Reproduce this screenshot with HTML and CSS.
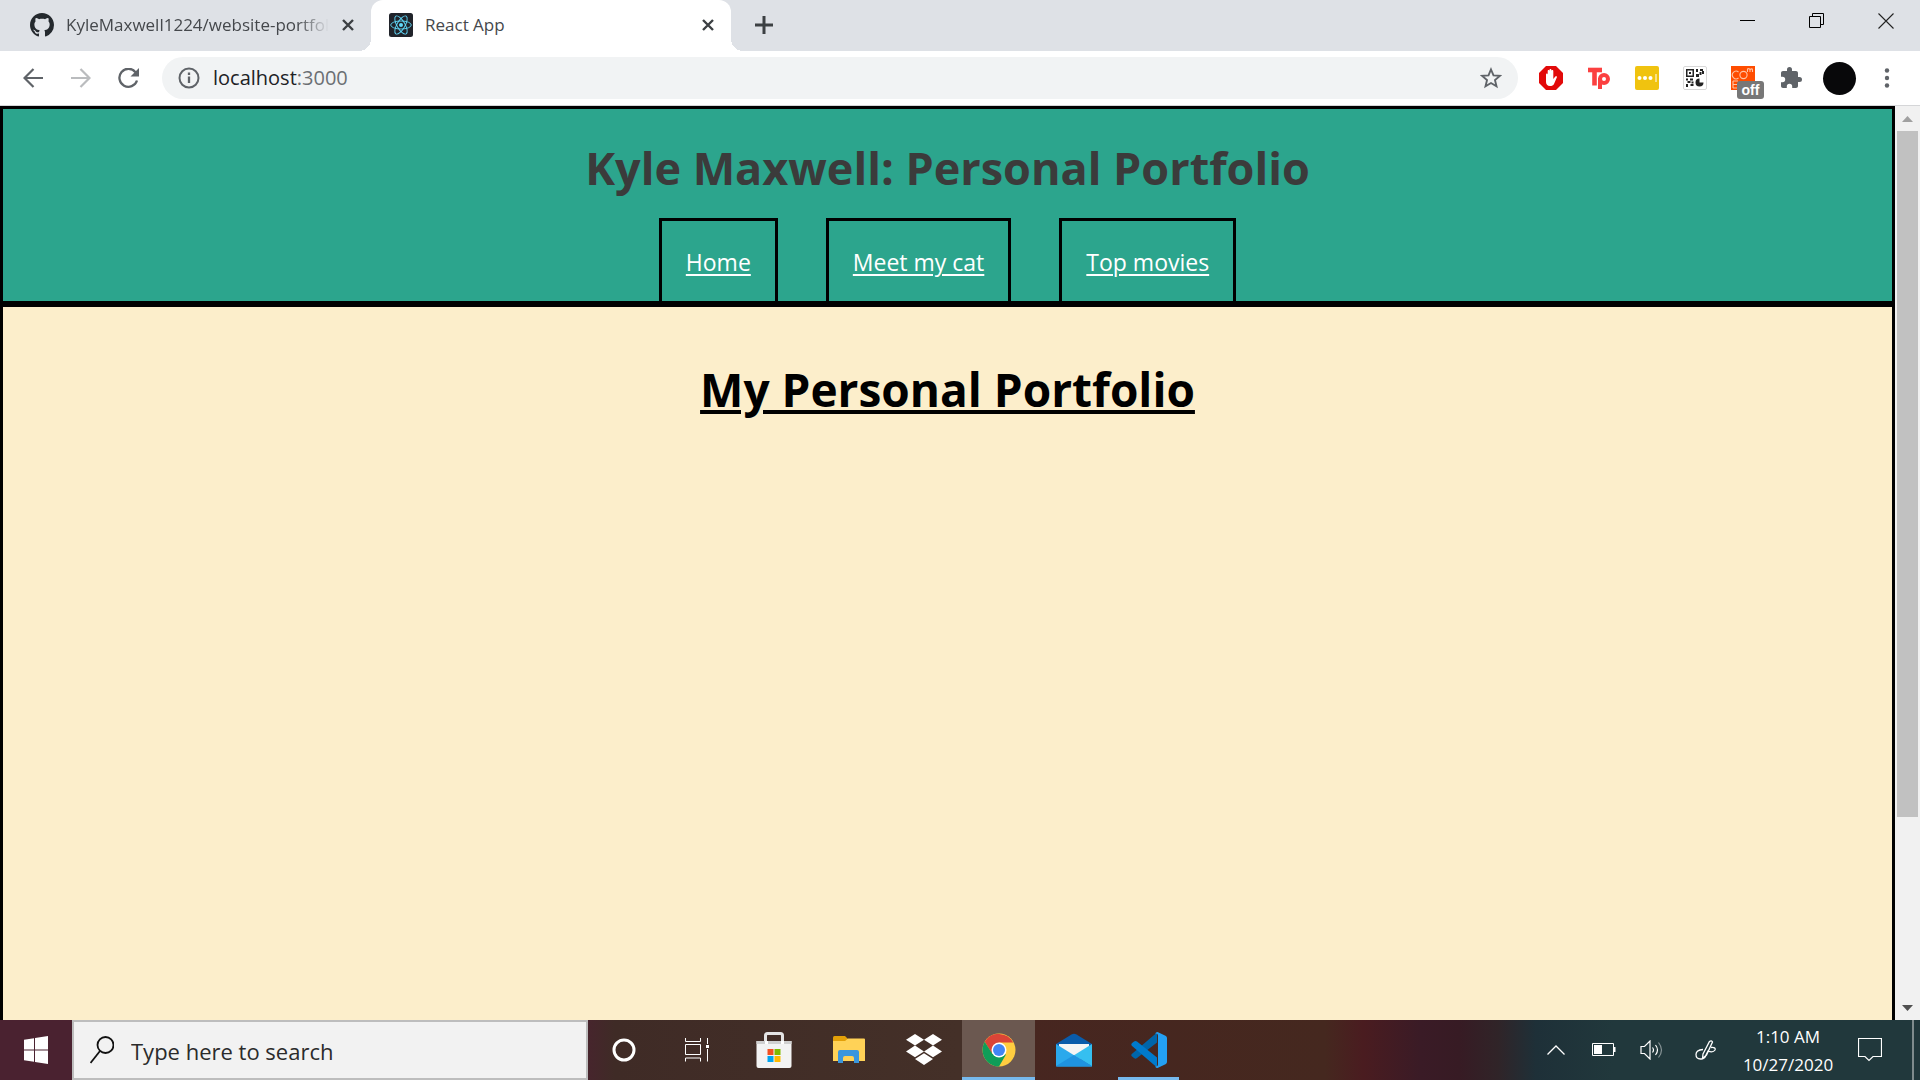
FILE: index.html
```html
<!DOCTYPE html>
<html lang="en">
<head>
<meta charset="utf-8">
<title>React App</title>
<link rel="stylesheet" href="styles.css">
</head>
<body>
<div class="tabstrip">
  <div class="tab">
    <svg class="icon24" viewBox="0 0 16 16"><path fill="#24292e" d="M8 0C3.58 0 0 3.58 0 8c0 3.54 2.29 6.53 5.47 7.59.4.07.55-.17.55-.38 0-.19-.01-.82-.01-1.49-2.01.37-2.53-.49-2.69-.94-.09-.23-.48-.94-.82-1.13-.28-.15-.68-.52-.01-.53.63-.01 1.08.58 1.23.82.72 1.21 1.87.87 2.33.66.07-.52.28-.87.51-1.07-1.78-.2-3.64-.89-3.64-3.95 0-.87.31-1.59.82-2.15-.08-.2-.36-1.02.08-2.12 0 0 .67-.21 2.2.82.64-.18 1.32-.27 2-.27s1.36.09 2 .27c1.53-1.04 2.2-.82 2.2-.82.44 1.1.16 1.92.08 2.12.51.56.82 1.27.82 2.15 0 3.07-1.87 3.75-3.65 3.95.29.25.54.73.54 1.48 0 1.07-.01 1.93-.01 2.2 0 .21.15.46.55.38A8.01 8.01 0 0 0 16 8c0-4.42-3.58-8-8-8z"/></svg>
    <span class="tab-title fade">KyleMaxwell1224/website-portfolio</span>
    <button class="tab-close" aria-label="Close tab"><svg width="12" height="12" viewBox="0 0 12 12"><path d="M1 1l10 10M11 1L1 11" stroke="#3c4043" stroke-width="2.4"/></svg></button>
  </div>
  <div class="tab active">
    <svg class="icon24" viewBox="0 0 24 24"><rect width="24" height="24" rx="2.5" fill="#20232a"/><g fill="none" stroke="#61dafb" stroke-width=".9"><ellipse cx="12" cy="12" rx="10.3" ry="4"/><ellipse cx="12" cy="12" rx="10.3" ry="4" transform="rotate(60 12 12)"/><ellipse cx="12" cy="12" rx="10.3" ry="4" transform="rotate(120 12 12)"/></g><circle cx="12" cy="12" r="2" fill="#61dafb"/></svg>
    <span class="tab-title">React App</span>
    <button class="tab-close" aria-label="Close tab"><svg width="12" height="12" viewBox="0 0 12 12"><path d="M1 1l10 10M11 1L1 11" stroke="#3c4043" stroke-width="2.4"/></svg></button>
  </div>
  <button class="new-tab" aria-label="New tab"><svg width="18" height="18" viewBox="0 0 18 18"><path d="M9 0v18M0 9h18" stroke="#3c4043" stroke-width="3"/></svg></button>
  <div class="window-controls">
    <button aria-label="Minimize"><svg width="16" height="16" viewBox="0 0 16 16"><path d="M0 7.5h15" stroke="#000"/></svg></button>
    <button aria-label="Restore"><svg width="16" height="16" viewBox="0 0 16 16" fill="none" stroke="#000"><path d="M.5 3.500h11v11H.5zM3.500 3.500v-3h11v11h-3"/></svg></button>
    <button aria-label="Close"><svg width="16" height="16" viewBox="0 0 16 16"><path d="M.5.5l15 15M15.500.5l-15 15" stroke="#222" stroke-width="1.100"/></svg></button>
  </div>
</div>

<div class="toolbar">
  <button class="tool" aria-label="Back"><svg width="20" height="20" viewBox="0 0 20 20" fill="none" stroke="#5f6368" stroke-width="2.200"><path d="M20 10H2M10.500 1L1.500 10l9 9"/></svg></button>
  <button class="tool" aria-label="Forward"><svg width="20" height="20" viewBox="0 0 20 20" fill="none" stroke="#babcbe" stroke-width="2.200"><path d="M0 10h18M9.500 1l9 9-9 9"/></svg></button>
  <button class="tool" aria-label="Reload"><svg width="22" height="20" viewBox="0 0 22 20"><path d="M17.500 4.200A9 9 0 1 0 19 12.500" fill="none" stroke="#5f6368" stroke-width="2.300"/><path d="M21 0v8.500h-8.500z" fill="#5f6368"/></svg></button>
  <div class="omnibox">
    <svg width="22" height="22" viewBox="0 0 22 22"><circle cx="11" cy="11" r="9.500" fill="none" stroke="#5f6368" stroke-width="2"/><path d="M11 9.500v6.500M11 5.500V8" stroke="#5f6368" stroke-width="2.300"/></svg>
    <span class="url">localhost<span class="port">:3000</span></span>
    <button class="star" aria-label="Bookmark"><svg width="22" height="22" viewBox="0 0 22 22"><path d="M11 2.500l2.500 5.900 6.300.5-4.800 4.200 1.500 6.200L11 16l-5.500 3.300L7 13.100 2.200 8.900l6.300-.5z" fill="none" stroke="#5f6368" stroke-width="1.900"/></svg></button>
  </div>
  <div class="extensions">
    <button class="tool" aria-label="Ad blocker"><svg class="icon24" viewBox="0 0 24 24"><path d="M7 0h10l7 7v10l-7 7H7l-7-7V7z" fill="#e20a0a"/><path d="M7 8.500c0-1.300 1.700-1.300 1.700 0V11V5c0-1.300 1.800-1.300 1.800 0v5.500V4c0-1.300 1.900-1.300 1.900 0v6.500V5c0-1.300 1.900-1.300 1.900 0v8l1.800-2.200c.9-1 2.400-.3 1.700.8L15 18c-.8 1.500-2 2-4 2-2.700 0-4-1.700-4-4z" fill="#fff"/></svg></button>
    <button class="tool" aria-label="Tp"><svg class="icon24" viewBox="0 0 24 24" fill="none" stroke="#fb4040"><path d="M1 4h14" stroke-width="4.600"/><path d="M7.500 4v15.500" stroke-width="4.600"/><circle cx="17" cy="13" r="4" stroke-width="4"/><path d="M13 12v11" stroke-width="4"/></svg></button>
    <button class="tool" aria-label="Passwords"><svg class="icon24" viewBox="0 0 24 24"><rect width="24" height="24" rx="2" fill="#f0c30f"/><g fill="#fff"><circle cx="4.500" cy="12" r="2"/><circle cx="10" cy="12" r="2"/><circle cx="15.500" cy="12" r="2"/><path d="M20.500 8h1v8h-1z"/></g></svg></button>
    <button class="tool" aria-label="QR code"><svg class="icon24" viewBox="0 0 24 24"><rect x=".5" y=".5" width="23" height="23" rx="1.500" fill="#fff" stroke="#d8d8d8"/><g fill="#222"><path d="M3 3h8v8H3zM4.500 4.500v5h5v-5z" fill-rule="evenodd"/><path d="M6 6h2v2H6zM13 3h2v3h-2zM13 8h3v3h-3zM17 3h3v2h-3zM19 5h2v3h-2zM16.500 6h2v3h-2zM3 12.500h2v2H3zM7 12.500h3v2H7zM4.500 15h3v2h-3zM3 18h2v3H3zM7.500 18h3v2h-3zM8.500 15.500h2v2h-2z"/><path d="M16.500 12.500v4h4a4 4 0 1 1-4-4z"/></g></svg></button>
    <button class="tool badged" aria-label="Extension off"><svg class="icon24" viewBox="0 0 24 24"><path fill="#ff4d00" d="M0 0h24v24H0z"/><g fill="none" stroke="#ffc5a5" stroke-width="1.100"><path d="M7.500 6a3.800 3.800 0 1 0 0 6"/><circle cx="12.500" cy="9" r="3.600"/><path d="M16.500 6V2.500M16.500 3q2-1 2.500 1v2M19 3.500q2.500-1.500 2.500.5v2M2 15h5M2 18.500h5M2 22h5M2 15v7"/></g></svg><span class="badge">off</span></button>
    <button class="tool" aria-label="Extensions"><svg class="icon24" viewBox="0 0 24 24"><path fill="#5f6368" d="M20.500 11H19V7c0-1.100-.9-2-2-2h-4V3.500a2.500 2.500 0 0 0-5 0V5H4c-1.100 0-2 .9-2 2v3.800h1.500a2.700 2.700 0 0 1 0 5.400H2V20c0 1.100.9 2 2 2h3.800v-1.500a2.700 2.700 0 0 1 5.400 0V22H17c1.100 0 2-.9 2-2v-4h1.500a2.500 2.500 0 0 0 0-5z"/></svg></button>
    <button class="tool" aria-label="Profile"><span class="avatar"></span></button>
    <button class="tool" aria-label="Menu"><svg width="6" height="20" viewBox="0 0 6 20" fill="#5f6368"><circle cx="3" cy="2.500" r="2.200"/><circle cx="3" cy="10" r="2.200"/><circle cx="3" cy="17.500" r="2.200"/></svg></button>
  </div>
</div>

<div class="viewport">
  <div class="page">
    <header class="site-header">
      <h1>Kyle Maxwell: Personal Portfolio</h1>
      <nav>
        <div class="nav-item"><a href="#home">Home</a></div>
        <div class="nav-item"><a href="#cat">Meet my cat</a></div>
        <div class="nav-item"><a href="#movies">Top movies</a></div>
      </nav>
    </header>
    <main class="site-main"><h2>My Personal Portfolio</h2></main>
  </div>
  <div class="scrollbar">
    <svg width="11" height="6" viewBox="0 0 11 6"><path d="M0 6L5.500 0 11 6z" fill="#a0a0a0"/></svg>
    <div class="track"><div class="thumb"></div></div>
    <svg width="11" height="6" viewBox="0 0 11 6"><path d="M0 0l5.500 6L11 0z" fill="#505050"/></svg>
  </div>
</div>

<div class="taskbar">
  <button class="start" aria-label="Start"><svg width="24" height="28" viewBox="0 0 24 28" fill="#fff"><path d="M0 3.700l10-1.500V13.500H0zM11 2L24 0v13.500H11zM0 14.500h10v11.300L0 24.300zM11 14.500h13V28l-13-2z"/></svg></button>
  <label class="search">
    <svg width="24" height="28" viewBox="0 0 24 28" fill="none" stroke="#111" stroke-width="1.800"><circle cx="15.500" cy="9" r="8"/><path d="M10 15L.5 27"/></svg>
    <input type="text" placeholder="Type here to search" aria-label="Type here to search">
  </label>
  <div class="apps">
    <button class="cortana" aria-label="Cortana"><svg width="24" height="24" viewBox="0 0 24 24"><circle cx="12" cy="12" r="10" fill="none" stroke="#fff" stroke-width="3"/></svg></button>
    <button class="task-view" aria-label="Task view"><svg width="24" height="24" viewBox="0 0 24 24" fill="none" stroke="#fff"><path d="M.5 0v3.500h15V0M.5 6.500h15v10H.5zM.5 23.500V20h15v3.500M22.500 0v6M22.500 11v12.500"/><path d="M21 7h3v3h-3z" fill="#fff" stroke="none"/></svg></button>
    <button aria-label="Microsoft Store"><svg width="36" height="36" viewBox="0 0 36 36"><path d="M9.500 11V3.500q0-2 2-2h13q2 0 2 2V11" fill="none" stroke="#e4e4e4" stroke-width="3"/><path d="M.5 9h35v25q0 2-2 2h-31q-2 0-2-2z" fill="#f3f3f3"/><path d="M.5 9h35v3H.5z" fill="#d0d0d0"/><path d="M9 9h3v3H9zM25 9h3v3h-3z" fill="#fff"/><path fill="#f25022" d="M11.500 17h6v6h-6z"/><path fill="#7fba00" d="M18.500 17h6v6h-6z"/><path fill="#00a4ef" d="M11.500 24h6v6h-6z"/><path fill="#ffb900" d="M18.500 24h6v6h-6z"/></svg></button>
    <button aria-label="File Explorer"><svg width="32" height="28" viewBox="0 0 32 28"><path d="M0 1.500Q0 0 1.500 0H12l3 3v6H0z" fill="#e3a008"/><path d="M0 5h12l3-2.500h16q1 0 1 1V25H0z" fill="#ffd257"/><path d="M5 27V16q0-2 2-2h17q2 0 2 2v11h-5v-5q0-2-2-2h-7q-2 0-2 2v5z" fill="#3a96dd"/></svg></button>
    <button aria-label="Dropbox"><svg width="36" height="32" viewBox="0 0 36 32" fill="#fff"><path d="M9 0l9 5.800-9 5.800-9-5.800zM27 0l9 5.800-9 5.800-9-5.800zM9 11.600l9 5.800-9 5.800-9-5.800zM27 11.600l9 5.800-9 5.800-9-5.800zM18 19.200l9 5.800-9 6-9-6z"/></svg></button>
    <button class="current" aria-label="Chrome"><svg width="34" height="34" viewBox="0 0 34 34"><circle cx="17" cy="17" r="16.500" fill="#ffcd40"/><path d="M2.700 8.800A16.500 16.500 0 0 1 31.300 9.500H17L10 20.500z" fill="#db4437"/><path d="M2.700 8.800A16.500 16.500 0 0 0 17 33.500L24 21.500 10.500 21z" fill="#0f9d58"/><circle cx="17" cy="17" r="7.500" fill="#fff"/><circle cx="17" cy="17" r="6" fill="#4285f4"/></svg></button>
    <button aria-label="Mail"><svg width="36" height="34" viewBox="0 0 36 34"><path d="M0 11L15.500 1.500q2.500-1.500 5 0L36 11v6H0z" fill="#0a5cab"/><path d="M3 11h30v15H3z" fill="#f5f5f5"/><path d="M0 11l36 22.500H1q-1 0-1-1z" fill="#2ba9ec"/><path d="M36 11L18 22.200 36 33.500z" fill="#35bff0"/><path d="M0 33q0 .5 1 .5h34q1 0 1-.5L18 22z" fill="#1f93e0"/></svg></button>
    <button class="running" aria-label="Visual Studio Code"><svg width="36" height="36" viewBox="0 0 36 36"><path d="M26 .5v10L6 26q-1.500 1.300-3 0L.8 24.300q-1-1.200 0-2.300z" fill="#0065a9"/><path d="M26 35.500v-10L6 9.500q-1.500-1-3 0L.8 11.200q-1 1.300 0 2.500z" fill="#007acc"/><path d="M26.500 0L34.500 3.700q1.500.7 1.500 2.300v24q0 1.600-1.500 2.300L26.500 36q-1.500 0-2.500-1.500 3 .5 3-2V3.500q0-2.500-3-2Q25 0 26.500 0z" fill="#24a0f3"/></svg></button>
  </div>
  <div class="tray">
    <button aria-label="Hidden icons"><svg width="18" height="10" viewBox="0 0 18 10"><path d="M.5 9.500L9 1l8.500 8.500" fill="none" stroke="#fff" stroke-width="1.300"/></svg></button>
    <button aria-label="Battery"><svg width="24" height="14" viewBox="0 0 24 14"><path d="M.5.500h21v12H.5z" fill="none" stroke="#fff"/><path d="M2 2h8v9H2zM22 4h1.500v5H22z" fill="#fff"/></svg></button>
    <button aria-label="Volume"><svg width="24" height="20" viewBox="0 0 24 20" fill="none" stroke="#fff" stroke-width="1.200"><path d="M1 6.500h3.500L10 1v18l-5.500-5.500H1zM12.500 7.500q2 2.500 0 5M15.500 5q4 5 0 10"/><path d="M18.500 2.500q6 7.500 0 15" opacity=".45"/></svg></button>
    <button class="pen" aria-label="Ink workspace"><svg width="22" height="20" viewBox="0 0 22 20" fill="none" stroke="#fff" stroke-width="1.300"><path d="M8 14L14.500 1.500q2-1.500 3 .5L11.500 15l-4 3.500zM8 9.500Q1 10 1 14.500t4.500 4.500 5.500-4l2-4q5 2 7-1 1-3-4-2.500"/></svg></button>
    <div class="clock"><span>1:10 AM</span><span>10/27/2020</span></div>
    <button class="notice" aria-label="Notifications"><svg width="24" height="24" viewBox="0 0 24 24"><path d="M.5.500h23v18H15L11 22.500 7 18.500H.5z" fill="none" stroke="#fff" stroke-width="1.200"/></svg></button>
    <div class="show-desktop"></div>
  </div>
</div>
</body>
</html>
```
FILE: styles.css
```css
* { box-sizing: border-box; }
body {
  margin: 0;
  height: 100vh;
  display: flex;
  flex-direction: column;
  overflow: hidden;
  font-family: "Open Sans", "Noto Sans", sans-serif;
}
button {
  border: 0;
  padding: 0;
  background: none;
  display: flex;
  align-items: center;
  justify-content: center;
}
svg { display: block; flex: none; }
.icon24 { width: 24px; height: 24px; }

/* Tab strip */
.tabstrip {
  flex: none;
  display: flex;
  height: 51px;
  padding-left: 12px;
  background: #dee1e6;
}
.tab {
  position: relative;
  display: flex;
  align-items: center;
  gap: 12px;
  width: 359px;
  padding: 0 16px 2px 18px;
  color: #45484c;
}
.tab.active {
  width: 360px;
  background: #fff;
  border-radius: 12px 12px 0 0;
}
.tab.active::before,
.tab.active::after {
  content: "";
  position: absolute;
  bottom: 0;
  width: 12px;
  height: 12px;
}
.tab.active::before { left: -12px; background: radial-gradient(circle at 0 0, #dee1e6 12px, #fff 12px); }
.tab.active::after { right: -12px; background: radial-gradient(circle at 100% 0, #dee1e6 12px, #fff 12px); }
.tab-title {
  flex: 1;
  overflow: hidden;
  white-space: nowrap;
  font-size: 17px;
  line-height: 24px;
}
.fade {
  -webkit-mask-image: linear-gradient(to right, #000 88%, transparent);
  mask-image: linear-gradient(to right, #000 88%, transparent);
}
.tab-close { width: 14px; height: 24px; }
.new-tab { width: 66px; padding-bottom: 1px; }
.window-controls { display: flex; margin-left: auto; }
.window-controls button { width: 69px; height: 42px; }

/* Toolbar */
.toolbar {
  flex: none;
  display: flex;
  align-items: center;
  height: 55px;
  padding: 0 9px;
  border-bottom: 1px solid #d5d6d8;
  background: #fff;
}
.tool { width: 48px; height: 42px; }
.omnibox {
  flex: 1;
  display: flex;
  align-items: center;
  gap: 13px;
  height: 42px;
  margin: 0 9px;
  padding: 0 16px;
  border-radius: 21px;
  background: #f1f3f4;
}
.url { flex: 1; font-size: 20px; line-height: 28px; color: #202124; }
.port { color: #6b6f73; }
.extensions { display: flex; }
.badged { position: relative; }
.badge {
  position: absolute;
  left: 18px;
  top: 24px;
  width: 27px;
  height: 18px;
  border-radius: 3px;
  background: #777;
  color: #fff;
  font-size: 14px;
  font-weight: 600;
  line-height: 18px;
}
.avatar { width: 33px; height: 33px; border-radius: 50%; background: #08080a; }

/* Site */
.viewport { flex: 1; display: flex; min-height: 0; }
.page { flex: 1; display: flex; flex-direction: column; overflow: hidden; text-align: center; }
.site-header {
  flex: none;
  border: 3px solid #000;
  background: #2ca58d;
}
.site-header h1 {
  margin: 0;
  padding: 27px 0 18px;
  font-size: 45px;
  line-height: 64px;
  color: #3b3b3b;
}
.site-header nav { display: flex; justify-content: center; gap: 48px; }
.nav-item {
  height: 83px;
  padding: 24px 24px 0;
  border: 3px solid #000;
  border-bottom: 0;
  font-size: 23px;
  line-height: 34px;
}
.nav-item a { color: #fff; text-decoration-thickness: 2px; text-underline-offset: 3px; }
.site-main {
  flex: 1;
  border: solid #000;
  border-width: 3px 3px 0;
  background: #fceecb;
}
.site-main h2 {
  margin: 0;
  padding-top: 50px;
  font-size: 46px;
  line-height: 64px;
  text-decoration: underline;
  text-decoration-thickness: 4px;
  text-underline-offset: 3px;
}
.scrollbar {
  flex: none;
  display: flex;
  flex-direction: column;
  align-items: center;
  width: 25px;
  padding: 10px 0 9px;
  background: #f1f1f1;
}
.track { flex: 1; width: 21px; margin: 9px 0; }
.thumb { height: 79.3%; background: #c1c1c1; }

/* Taskbar */
.taskbar {
  flex: none;
  display: flex;
  height: 60px;
  background: linear-gradient(to right, #4a2230 0, #4a2230 30%, #3f2b26 32%, #443028 50%, #472620 53%, #45281f 69%, #4a1c20 71%, #3a1b26 74%, #371b24 76%, #302428 78%, #1e3038 80%, #21383c 84%, #21383c);
}
.start { width: 72px; }
.search {
  display: flex;
  align-items: center;
  gap: 17px;
  width: 516px;
  padding: 0 16px;
  border: 2px solid #bdbdbd;
  background: #f2f2f2;
}
.search input {
  flex: 1;
  min-width: 0;
  border: 0;
  padding: 2px 0 0;
  background: none;
  outline: 0;
  font: 22px/30px "Open Sans", "Noto Sans", sans-serif;
}
.search input::placeholder { color: #2b2b2b; opacity: 1; }
.apps { display: flex; gap: 2px; }
.apps button { width: 73px; }
.apps .cortana { width: 72px; }
.apps .task-view { padding-right: 4px; }
.apps .current { background: #6b5850; box-shadow: inset 0 -3px #76b9ed; }
.apps .running {
  background: linear-gradient(#76b9ed, #76b9ed) center bottom / 61px 3px no-repeat;
}
.tray { display: flex; margin-left: auto; color: #fff; }
.tray button { width: 48px; }
.tray .pen { width: 60px; }
.clock {
  display: flex;
  flex-direction: column;
  justify-content: center;
  width: 104px;
  padding-top: 1px;
  text-align: center;
  font-size: 17px;
  line-height: 28px;
}
.tray .notice { width: 60px; }
.show-desktop { width: 8px; margin-left: 12px; border-left: 2px solid #7f8b8d; }
```
